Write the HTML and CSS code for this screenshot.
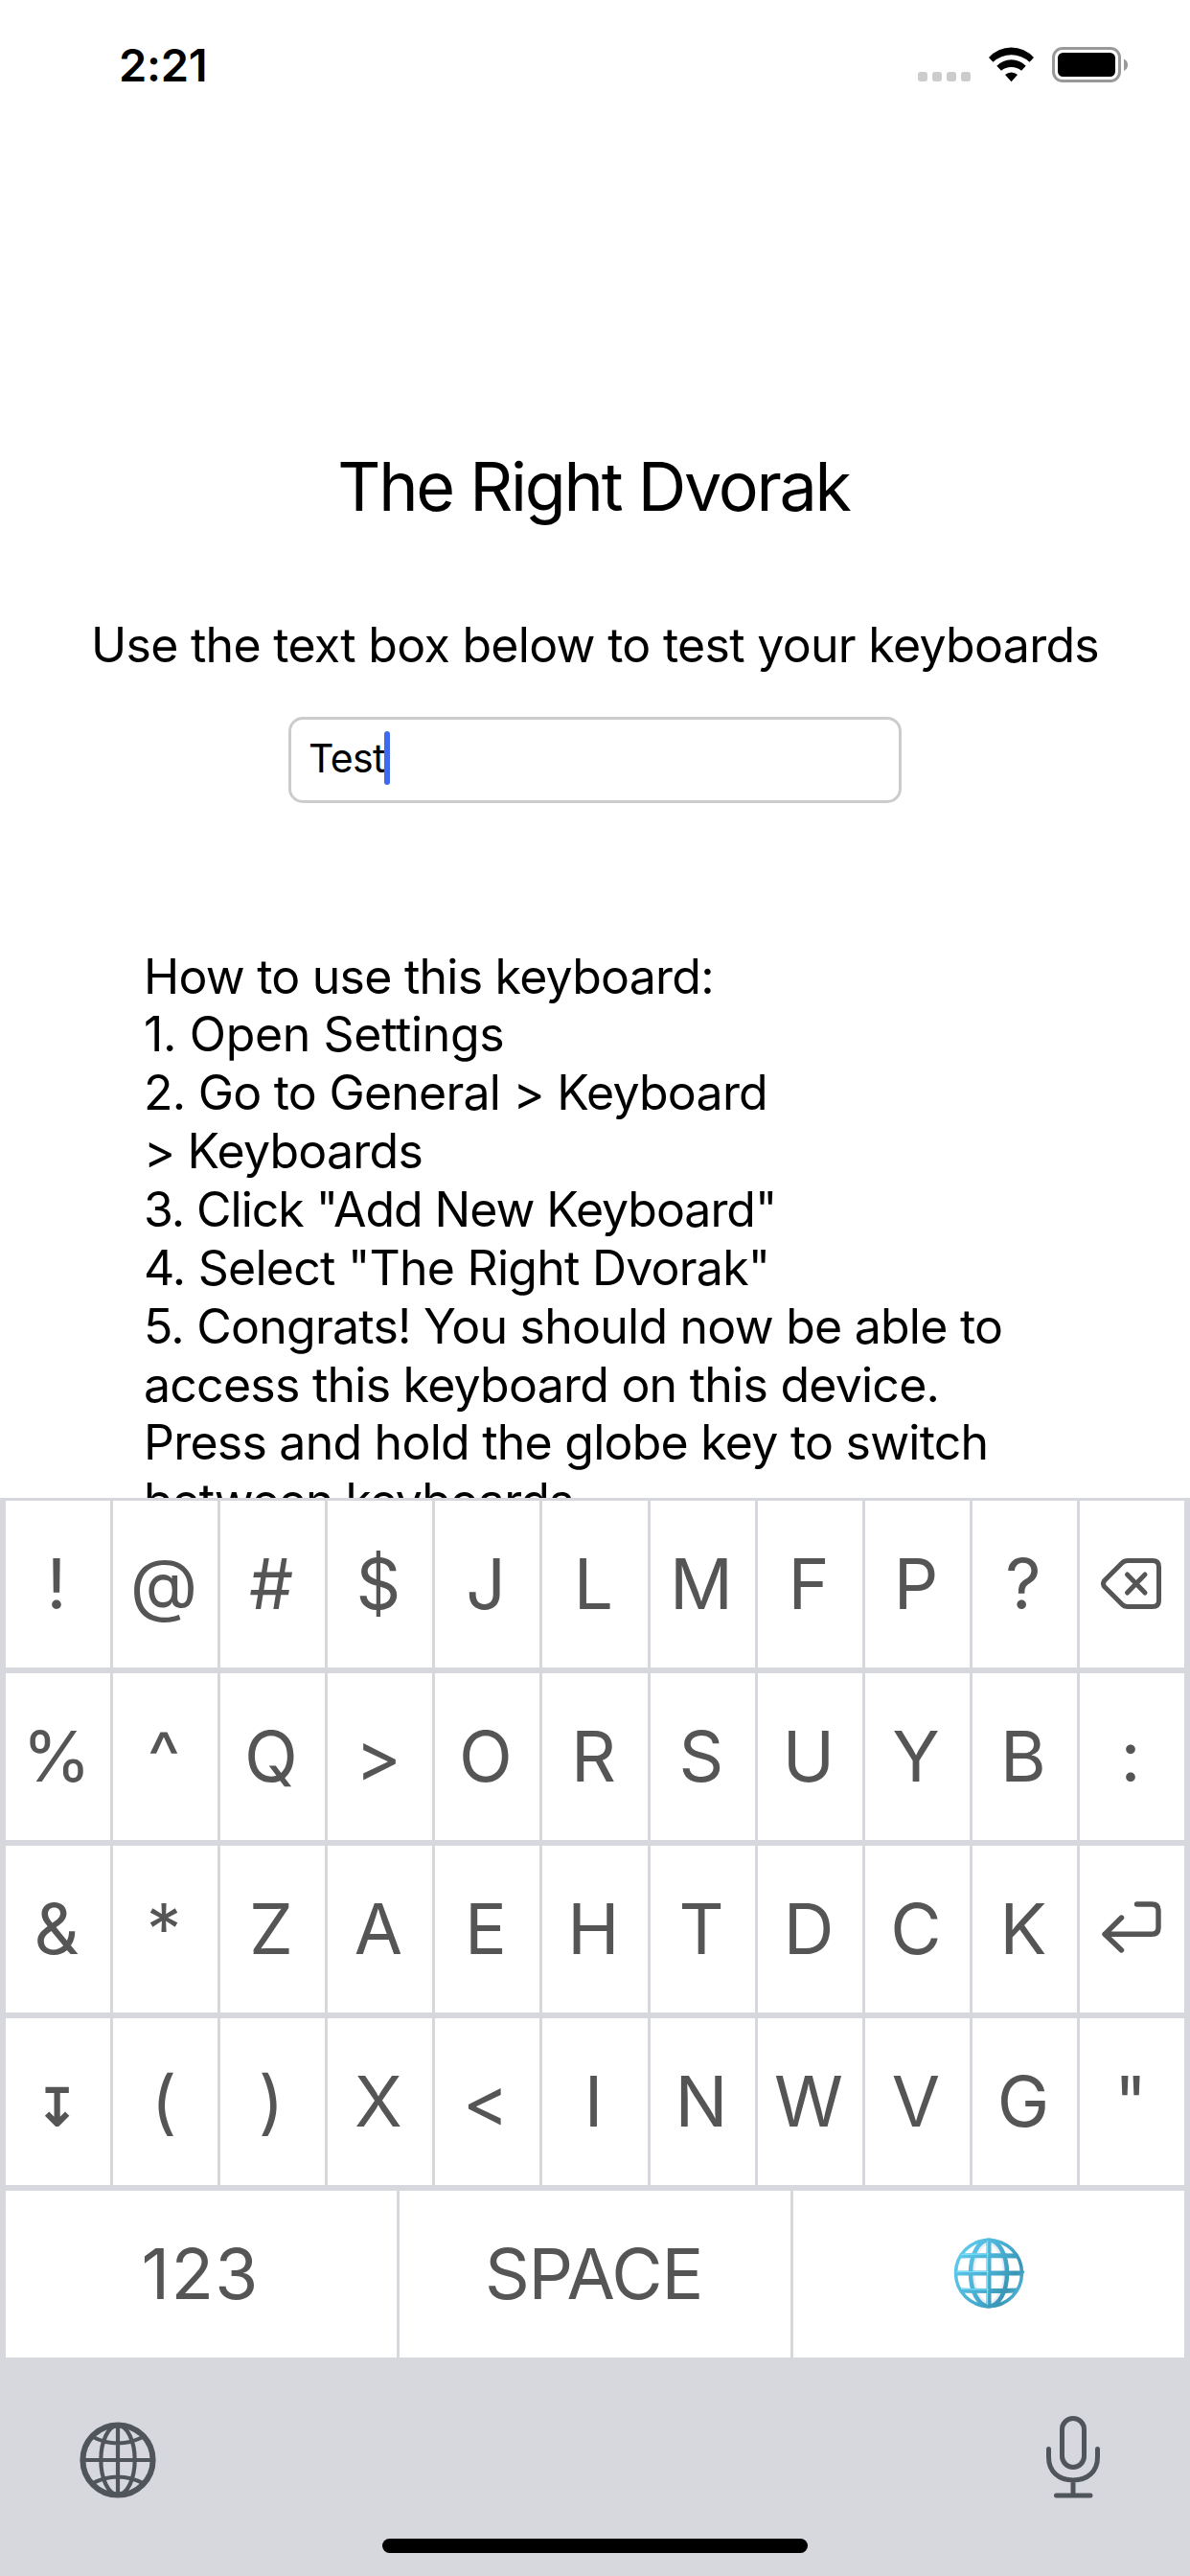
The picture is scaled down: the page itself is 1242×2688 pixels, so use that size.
FILE: index.html
```html
<!DOCTYPE html>
<html lang="en">
<head>
<meta charset="utf-8">
<title>The Right Dvorak</title>
<link rel="stylesheet" href="styles.css">
</head>
<body>
<main class="app">
  <header class="status">
    <span class="time">2:21</span>
    <svg class="status-icons" width="219" height="38" viewBox="0 0 219 38">
      <g fill="#ccc">
        <rect x="0" y="26" width="10" height="10" rx="3"/>
        <rect x="15" y="26" width="10" height="10" rx="3"/>
        <rect x="30" y="26" width="10" height="10" rx="3"/>
        <rect x="45" y="26" width="10" height="10" rx="3"/>
      </g>
      <path d="M74 11A31.500 31.500 0 0 1 121 11L116.500 15.700A28 28 0 0 0 78.500 15.700Z"/>
      <path d="M82.300 19.700A21 21 0 0 1 112.700 19.700L108 24.700A16.500 16.500 0 0 0 87 24.700Z"/>
      <path d="M91 29A9.500 9.500 0 0 1 104 29L97.500 36.300Z"/>
      <rect x="141.500" y="1.500" width="69" height="34" rx="9.500" fill="none" stroke="#999" stroke-width="3"/>
      <rect x="146" y="6" width="60" height="25" rx="5.500"/>
      <path d="M215 12.500Q219 14.500 219 18.700T215 25Z" fill="#999"/>
    </svg>
  </header>
  <h1 class="title">The Right Dvorak</h1>
  <p class="subtitle">Use the text box below to test your keyboards</p>
  <div class="field"><span>Test</span><i class="caret"></i></div>
  <div class="steps">
    <p>How to use this keyboard:</p>
    <p class="loose">1. Open Settings</p>
    <p>2. Go to General &gt; Keyboard</p>
    <p>&gt; Keyboards</p>
    <p class="tight">3. Click "Add New Keyboard"</p>
    <p>4. Select "The Right Dvorak"</p>
    <p>5. Congrats! You should now be able to</p>
    <p>access this keyboard on this device.</p>
    <p>Press and hold the globe key to switch</p>
    <p class="tight">between keyboards</p>
  </div>
</main>
<section class="keyboard">
  <div class="row"><b>!</b><b>@</b><b>#</b><b>$</b><b>J</b><b>L</b><b>M</b><b>F</b><b>P</b><b>?</b><b>
    <svg width="63" height="53" viewBox="0 0 63 53" fill="none" stroke="#555" stroke-width="5" stroke-linecap="round" stroke-linejoin="round"><path d="M28 2.500H54Q60.500 2.500 60.500 9V44Q60.500 50.500 54 50.500H28Q24.500 50.500 22 48L4 30Q1 26.500 4 23L22 5Q24.500 2.500 28 2.500Z"/><path d="M27.500 17L46 36M46 17L27.500 36"/></svg></b></div>
  <div class="row"><b>%</b><b>^</b><b>Q</b><b>&gt;</b><b>O</b><b>R</b><b>S</b><b>U</b><b>Y</b><b>B</b><b>:</b></div>
  <div class="row"><b>&amp;</b><b>*</b><b>Z</b><b>A</b><b>E</b><b>H</b><b>T</b><b>D</b><b>C</b><b>K</b><b>
    <svg class="return" width="62" height="54" viewBox="0 0 62 54" fill="none" stroke="#555" stroke-width="5.400" stroke-linecap="round" stroke-linejoin="round"><path d="M36.500 3H52Q59 3 59 9.500V27.500Q59 34.300 52 34.300H3M20.500 17L3 34.300L20.500 51"/></svg></b></div>
  <div class="row"><b><span class="shift">↧</span></b><b>(</b><b>)</b><b>X</b><b>&lt;</b><b>I</b><b>N</b><b>W</b><b>V</b><b>G</b><b>"</b></div>
  <div class="row wide"><b class="num">123</b><b class="space">SPACE</b><b>
    <svg class="emoji" width="74" height="74" viewBox="-37 -37 74 74" fill="none">
      <defs><linearGradient id="sea" gradientUnits="userSpaceOnUse" x1="-37" y1="-20" x2="37" y2="20"><stop offset="0" stop-color="#62cdf0"/><stop offset=".55" stop-color="#45abcd"/><stop offset=".8" stop-color="#3a95b6"/><stop offset="1" stop-color="#55bfe2"/></linearGradient></defs>
      <ellipse rx="17" ry="32" stroke="#e6edf8" stroke-width="5"/>
      <g stroke="url(#sea)"><circle r="34.500" stroke-width="3.500"/><ellipse rx="19" ry="34.500" stroke-width="4.500"/><path stroke-width="5" d="M0-35V35.010M-35 0H35V.01M-29-18Q0-19 29-18M-29 18Q0 19 29 18"/></g>
      <path d="M-34-1.500H0M-29-19.500Q-14-20 0-20M-29 16.500Q-14 17 0 17M-1.500-34V33" stroke="#7ce0fb" stroke-width="1.200"/>
    </svg></b></div>
  <footer class="dock">
    <svg width="80" height="80" viewBox="0 0 80 80" fill="none" stroke="#50555b" stroke-width="4.200"><circle cx="40" cy="40" r="36.600" stroke-width="6"/><ellipse cx="40" cy="40" rx="17.700" ry="36"/><path d="M40 3V77M3 40H77M13 15.500Q40 29.500 67 15.500M13 64.500Q40 50.500 67 64.500"/></svg>
    <svg class="mic" width="56" height="86" viewBox="0 0 56 86" fill="none" stroke="#50555b" stroke-width="5" stroke-linecap="round"><rect x="16.500" y="2.500" width="23" height="51" rx="11.500"/><path d="M2.500 34.500V43C2.500 58 13 67 28 67S53.500 58 53.500 43V34.500M28 67V83M10.500 83H46"/></svg>
  </footer>
  <div class="home"></div>
</section>
</body>
</html>
```
FILE: styles.css
```css
* { box-sizing: border-box; }
body { margin: 0; width: 1242px; height: 2688px; background: #fff; color: #000; font-family: Inter, "Liberation Sans", sans-serif; overflow: hidden; }
h1, p { margin: 0; font-weight: 400; }
svg { display: block; flex: none; }

.app { height: 1563px; overflow: hidden; display: flex; flex-direction: column; align-items: center; }
.status { width: 100%; height: 136px; padding: 0 65px 0 124px; display: flex; align-items: center; justify-content: space-between; flex: none; }
.time { font-size: 47px; font-weight: 600; letter-spacing: -.3px; padding-bottom: 2px; }
.title { margin-top: 330px; margin-right: 3px; font-size: 70px; line-height: 84px; letter-spacing: -2.250px; white-space: nowrap; }
.subtitle { margin-top: 93px; font-size: 50px; line-height: 60px; letter-spacing: -.7px; white-space: nowrap; }
.field { margin-top: 45px; width: 640px; height: 90px; flex: none; border: 3px solid #ccc; border-radius: 15px; padding-left: 18px; display: flex; align-items: center; font-size: 41px; letter-spacing: -.6px; }
.field span { padding-bottom: 4px; }
.caret { width: 6px; height: 56px; margin: 0 0 4px -1px; border-radius: 3px; background: #4169ee; }
.steps { width: 100%; margin-top: 150.500px; padding-left: 150px; font-size: 50px; line-height: 60.860px; letter-spacing: -.76px; white-space: nowrap; }
.loose { letter-spacing: -.35px; }
.tight { letter-spacing: -1.040px; }

.keyboard { height: 1125px; background: #d7d8dd; padding: 3px 6px 0; display: flex; flex-direction: column; gap: 6px; }
.row { display: grid; grid-template-columns: repeat(5, 109px) 110px repeat(5, 109px); column-gap: 3px; height: 174px; flex: none; }
.row b { background: #fff; color: #555; font-size: 73px; font-weight: 400; display: flex; align-items: center; justify-content: center; padding: 0 3px 2px 0; }
.row svg { margin-right: -1px; }
.row .return { margin-bottom: 2px; }
.shift { font-size: 54px; font-weight: 700; padding-top: 12px; }
.wide { grid-template-columns: repeat(3, 408px); }
.row .num { letter-spacing: 1.300px; padding-right: 2px; }
.row .space { letter-spacing: -1.200px; }
.row .emoji { margin-right: -3px; }
.dock { height: 183px; margin-bottom: -6px; padding: 61px 88px 0 77px; display: flex; justify-content: space-between; align-items: flex-start; flex: none; }
.mic { margin-top: -6px; }
.home { width: 444px; height: 15px; border-radius: 8px; background: #000; align-self: center; }
```
